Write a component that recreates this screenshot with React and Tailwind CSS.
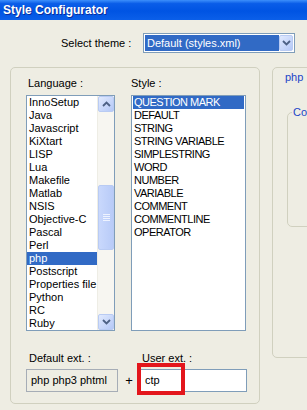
import React from 'react';

const languages = ['InnoSetup', 'Java', 'Javascript', 'KiXtart', 'LISP', 'Lua', 'Makefile', 'Matlab', 'NSIS', 'Objective-C', 'Pascal', 'Perl', 'php', 'Postscript', 'Properties file', 'Python', 'RC', 'Ruby'];
const styles = ['QUESTION MARK', 'DEFAULT', 'STRING', 'STRING VARIABLE', 'SIMPLESTRING', 'WORD', 'NUMBER', 'VARIABLE', 'COMMENT', 'COMMENTLINE', 'OPERATOR'];

function Chevron({ up }) {
  return (
    <svg width="9" height="6" viewBox="0 0 9 6">
      <path d={up ? 'M1 5 L4.5 1.5 L8 5' : 'M1 1 L4.5 4.5 L8 1'} fill="none" stroke="#4d6185" strokeWidth="1.8" />
    </svg>
  );
}

function ScrollButton({ up }) {
  return (
    <div className="h-[16px] flex items-center justify-center rounded-[2px] border border-[#b9cbf3] bg-[linear-gradient(135deg,#e1eafe,#b4c8f7)]">
      <Chevron up={up} />
    </div>
  );
}

export default function App() {
  return (
    <div className="relative w-[307px] h-[410px] overflow-hidden flex flex-col font-['Liberation_Sans',Arial,sans-serif] text-[11px] text-black">
      {/* title bar */}
      <div className="h-[20px] shrink-0 flex items-center pl-[3px] bg-[linear-gradient(to_bottom,#3c8ffb_0%,#0a5de8_18%,#0054e3_55%,#0b5fe9_100%)] text-white font-bold text-[12px] [text-shadow:1px_1px_#0a2d9c]">
        Style Configurator
      </div>

      <div className="flex flex-1">
        <div className="w-[3px] bg-[#0a5ae6]" />
        <div className="flex-1 bg-[#eeede3] flex flex-col">
          {/* theme selector */}
          <div className="mt-[13px] h-[20px] flex items-center">
            <span className="ml-[61px] w-[70px] whitespace-nowrap">Select theme :</span>
            <div className="ml-[12px] w-[152px] h-[20px] border border-[#7f9db9] bg-white p-[1px] flex">
              <div className="flex-1 bg-[#316ac5] text-white pl-[2px] leading-[16px]">Default (styles.xml)</div>
              <div className="w-[14px] flex items-center justify-center rounded-[2px] border border-[#b9cbf3] bg-[linear-gradient(135deg,#e1eafe,#b4c8f7)]">
                <Chevron />
              </div>
            </div>
          </div>

          <div className="mt-[14px] flex pl-[10px]">
            {/* left group */}
            <div className="w-[250px] h-[337px] shrink-0 border border-[#d0d0bf] rounded-[5px] pt-[9px] pl-[15px]">
              <div className="flex gap-[16px]">
                <div className="w-[89px]">
                  <div className="h-[13px] leading-[13px] pl-[2px] mb-[5px]">Language :</div>
                  <div className="h-[236px] border border-[#7f9db9] bg-white flex">
                    <div className="flex-1">
                      {languages.map(l => (
                        <div key={l} className={`h-[13px] leading-[13px] pl-[2px] whitespace-nowrap ${l === 'php' ? 'bg-[#316ac5] text-white' : ''}`}>{l}</div>
                      ))}
                    </div>
                    <div className="w-[17px] flex flex-col bg-[#f7f6f1] border-l border-[#eeede5]">
                      <ScrollButton up />
                      <div className="h-[73px]" />
                      <div className="h-[65px] flex items-center justify-center rounded-[2px] border border-[#b9cbf3] bg-[linear-gradient(90deg,#c9d8fc,#b8cbf8)]">
                        <div className="flex flex-col gap-[1px]">
                          <div className="w-[7px] h-[1px] bg-[#eef3ff]" />
                          <div className="w-[7px] h-[1px] bg-[#eef3ff]" />
                          <div className="w-[7px] h-[1px] bg-[#eef3ff]" />
                          <div className="w-[7px] h-[1px] bg-[#eef3ff]" />
                        </div>
                      </div>
                      <div className="flex-1" />
                      <ScrollButton />
                    </div>
                  </div>
                </div>
                <div className="w-[115px]">
                  <div className="h-[13px] leading-[13px] mb-[5px]">Style :</div>
                  <div className="h-[236px] border border-[#7f9db9] bg-white p-[1px] pt-0">
                    {styles.map((s, i) => (
                      <div key={s} className={`h-[13px] leading-[13px] pl-[1px] tracking-[-0.5px] whitespace-nowrap ${i === 0 ? 'bg-[#316ac5] text-white' : ''}`}>{s}</div>
                    ))}
                  </div>
                </div>
              </div>

              {/* extensions */}
              <div className="mt-[21px] flex">
                <div className="w-[92px]">
                  <div className="h-[13px] leading-[13px] pl-[3px]">Default ext. :</div>
                  <div className="mt-[4px] h-[23px] border border-[#a6adb6] bg-[#eeede3] pl-[4px] leading-[21px]">php php3 phtml</div>
                </div>
                <div className="w-[22px] pt-[17px] text-center text-[13px] leading-[23px]">+</div>
                <div className="w-[107px]">
                  <div className="h-[13px] leading-[13px] pl-[2px]">User ext. :</div>
                  <div className="mt-[4px] h-[23px] border border-[#7f9db9] bg-white pl-[4px] leading-[21px]">ctp</div>
                </div>
              </div>
            </div>

            {/* right group */}
            <div className="ml-[12px] w-[120px] h-[291px] shrink-0 border border-[#d0d0bf] rounded-[5px]">
              <div className="pl-[12px] pt-[3px] text-[#1c45c8] leading-[13px]">php</div>
              <fieldset className="mt-[22px] ml-[14px] w-[100px] h-[121px] border border-[#d0d0bf] rounded-[5px] pl-[4px]">
                <legend className="px-[1px] text-[#1c45c8] leading-[12px] whitespace-nowrap">Colour Style</legend>
              </fieldset>
            </div>
          </div>
        </div>
      </div>

      {/* red highlight annotation */}
      <div className="absolute left-[137px] top-[363px] w-[48px] h-[32px] border-4 border-[#e3161c]" />
    </div>
  );
}
